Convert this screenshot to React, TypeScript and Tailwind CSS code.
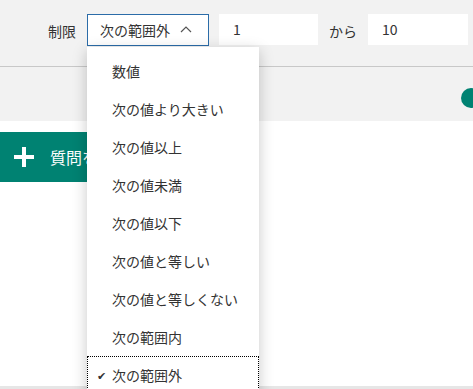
import { VFC } from 'react';

const OPTIONS = [
  '数値',
  '次の値より大きい',
  '次の値以上',
  '次の値未満',
  '次の値以下',
  '次の値と等しい',
  '次の値と等しくない',
  '次の範囲内',
  '次の範囲外',
];

const SELECTED = '次の範囲外';

const font = { fontFamily: '"Segoe UI", "Noto Sans CJK JP", sans-serif' };

const ChevronUp: VFC = () => (
  <svg width="12" height="8" viewBox="0 0 12 8" fill="none" stroke="#555" strokeWidth="1.2">
    <path d="M1 7 L6 2 L11 7" />
  </svg>
);

const Dropdown: VFC = () => (
  <div className="absolute left-0 top-[33px] w-[172px] bg-white pt-[5px] shadow-[0_4px_14px_rgba(0,0,0,0.22)] z-10">
    {OPTIONS.map((label) => {
      const selected = label === SELECTED;
      return (
        <div
          key={label}
          className={
            selected
              ? 'relative h-[38px] flex items-center pl-[24px] text-[14px] text-[#333] border border-dotted border-black'
              : 'relative h-[38px] flex items-center pl-[25px] text-[14px] text-[#333]'
          }
        >
          {selected && <span className="absolute left-[9px] text-[11px] text-[#333]">✔</span>}
          {label}
        </div>
      );
    })}
  </div>
);

export default function App() {
  return (
    <div className="w-[473px] h-[389px] overflow-hidden bg-white relative" style={font}>
      <div className="bg-[#f2f2f2] h-[121px]">
        <div className="h-[67px] border-b border-[#c8c8c8] flex items-start pt-[14px]">
          <span className="ml-[48px] mt-[7px] text-[14px] text-[#333]">制限</span>
          <div className="relative ml-[11px]">
            <div className="w-[122px] h-[32px] border border-[#2b6ca8] bg-white flex items-center pl-[12px] text-[14px] text-[#333]">
              次の範囲外
              <span className="ml-[10px] mb-[2px]">
                <ChevronUp />
              </span>
            </div>
            <Dropdown />
          </div>
          <div className="ml-[10px] w-[99px] h-[31px] bg-white flex items-center pl-[14px] text-[14px] text-[#333]">1</div>
          <span className="ml-[11px] mt-[7px] text-[14px] text-[#333]">から</span>
          <div className="ml-[11px] w-[100px] h-[31px] bg-white flex items-center pl-[14px] text-[14px] text-[#333]">10</div>
        </div>
        <div className="flex justify-end pt-[21px]">
          <div className="w-[20px] h-[20px] rounded-full bg-[#008272] mr-[-8px]" />
        </div>
      </div>
      <div className="pt-[11px]">
        <div className="h-[50px] w-[250px] bg-[#008272] flex items-center pl-[13px] text-white">
          <svg width="22" height="22" viewBox="0 0 22 22" fill="white">
            <rect x="9" y="1" width="4" height="20" />
            <rect x="1" y="9" width="20" height="4" />
          </svg>
          <span className="ml-[15px] text-[16px]">質問を追加</span>
        </div>
      </div>
      <div className="absolute left-0 right-0 bottom-0 h-[3px] bg-[#e6e6e6]" />
    </div>
  );
}
